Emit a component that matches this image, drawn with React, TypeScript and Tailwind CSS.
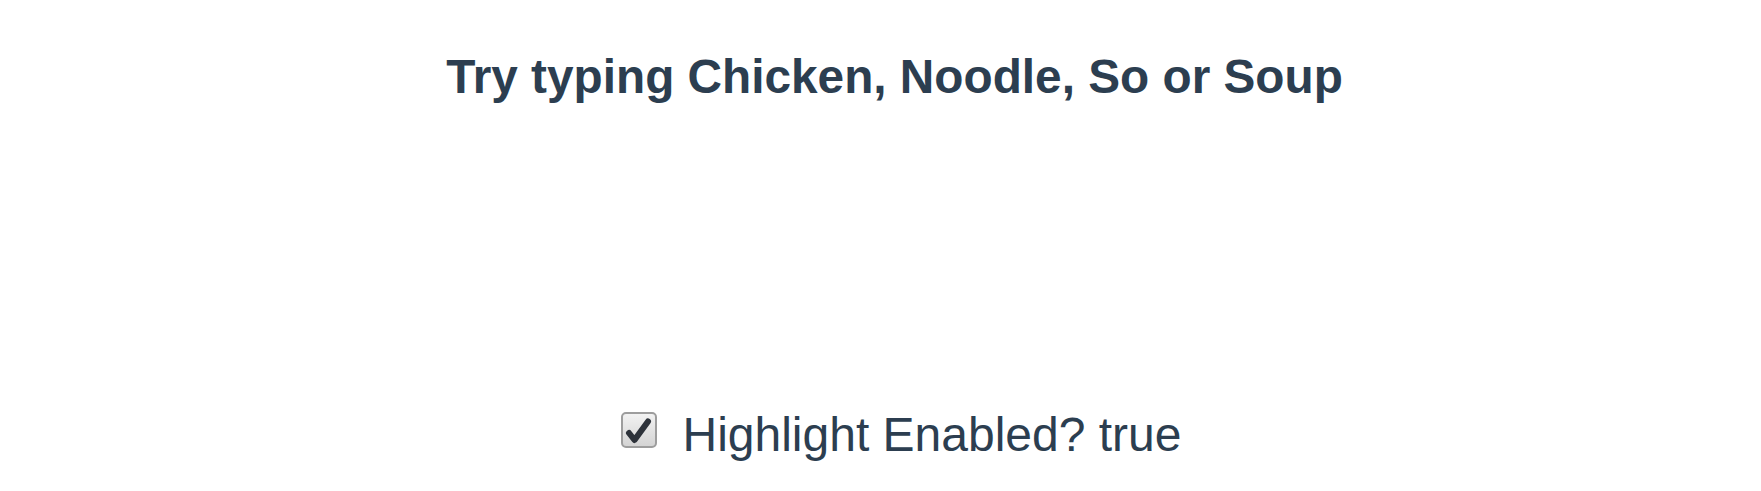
export default function App() {
  return (
    <div
      className="min-h-[491px] w-full bg-white text-[#2c3e50]"
      style={{ fontFamily: '"Liberation Sans", Arial, Helvetica, sans-serif' }}
    >
      <h1 className="pt-[49px] pl-[28px] text-center text-[47.75px] font-bold leading-[56px]">
        Try typing Chicken, Noodle, So or Soup
      </h1>

      <div className="mt-[302px] flex items-start justify-center pl-[42px]">
        <label className="flex items-start gap-[25px]">
          <span className="mt-[5px] flex h-[36px] w-[36px] items-center justify-center rounded-[5px] border-2 border-[#9d9d9d] bg-gradient-to-b from-[#f2f2f2] to-[#d4d4d4]">
            <svg viewBox="0 0 32 32" className="h-[32px] w-[32px]">
              <path
                d="M6 19 L11.5 26 L25 7.5"
                fill="none"
                stroke="#2d323a"
                strokeWidth="6"
                strokeLinecap="round"
                strokeLinejoin="round"
              />
            </svg>
          </span>
          <span className="text-[48px] leading-[56px]">Highlight Enabled? true</span>
        </label>
      </div>
    </div>
  );
}
